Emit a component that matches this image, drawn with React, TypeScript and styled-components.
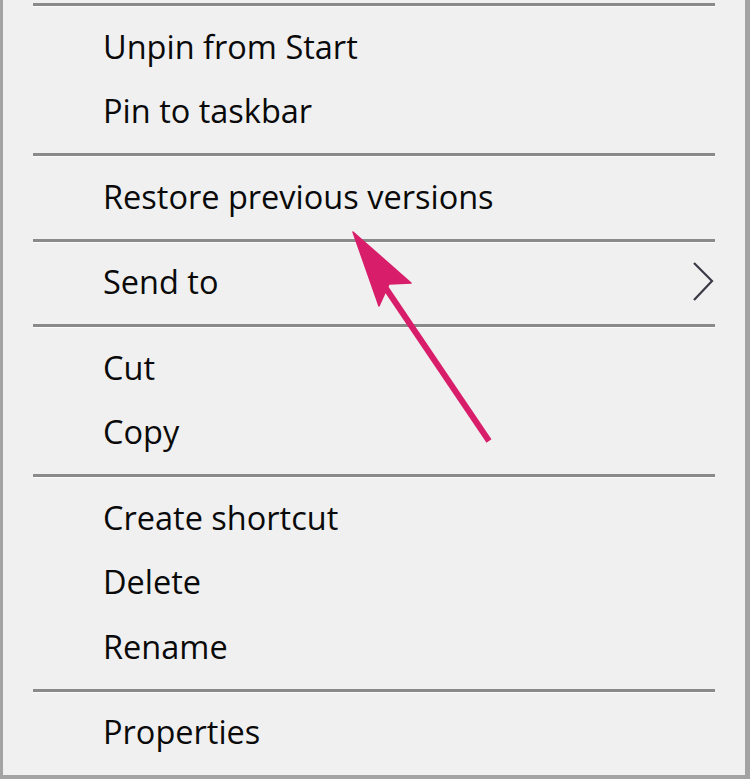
import * as React from "react";
import styled, { createGlobalStyle } from "styled-components";

const GlobalStyle = createGlobalStyle`
  html, body {
    margin: 0;
    padding: 0;
    background: #f0f0f0;
  }
`;

const Menu = styled.div`
  position: relative;
  box-sizing: border-box;
  width: 750px;
  height: 779px;
  padding: 2px 30px 0 30px;
  background: #f0f0f0;
  border-left: 3px solid #a3a3a3;
  border-right: 5px solid #a3a3a3;
  border-bottom: 4px solid #a3a3a3;
  font-family: "Open Sans", "Noto Sans", sans-serif;
  color: #0a0a0a;
  overflow: hidden;
`;

const Separator = styled.div<{ $first?: boolean }>`
  height: 3px;
  margin: ${(p) => (p.$first ? "1px" : "10px")} 0 8px 0;
  background: #8a8a8a;
  box-shadow: 0 1px 0 #fbfbfb;
`;

const Item = styled.div`
  display: flex;
  align-items: center;
  justify-content: space-between;
  height: 64.5px;
  padding-left: 70px;
  font-size: 32.5px;
  font-weight: 450;
`;

const Chevron = styled.svg`
  width: 24px;
  height: 40px;
`;

const Arrow = styled.svg`
  position: absolute;
  left: 0;
  top: 0;
  pointer-events: none;
`;

const groups: string[][] = [
  ["Unpin from Start", "Pin to taskbar"],
  ["Restore previous versions"],
  ["Send to"],
  ["Cut", "Copy"],
  ["Create shortcut", "Delete", "Rename"],
  ["Properties"],
];

export default function App() {
  return (
    <>
      <GlobalStyle />
      <Menu>
        {groups.map((g, gi) => (
          <React.Fragment key={gi}>
            <Separator $first={gi === 0} />
            {g.map((label) => (
              <Item key={label}>
                <span>{label}</span>
                {label === "Send to" && (
                  <Chevron viewBox="0 0 24 40">
                    <path d="M3 1 L21 19 L3 38" fill="none" stroke="#3a3a46" strokeWidth="2.2" />
                  </Chevron>
                )}
              </Item>
            ))}
          </React.Fragment>
        ))}
        <Arrow width="750" height="779" viewBox="0 0 750 779">
          <line x1="486" y1="441" x2="382" y2="287" stroke="#d81e6a" strokeWidth="6" />
          <path d="M350 232 L408 283 L386 284 L376 306 Z" fill="#d81e6a" stroke="#d81e6a" strokeWidth="1.5" strokeLinejoin="round" />
        </Arrow>
      </Menu>
    </>
  );
}
